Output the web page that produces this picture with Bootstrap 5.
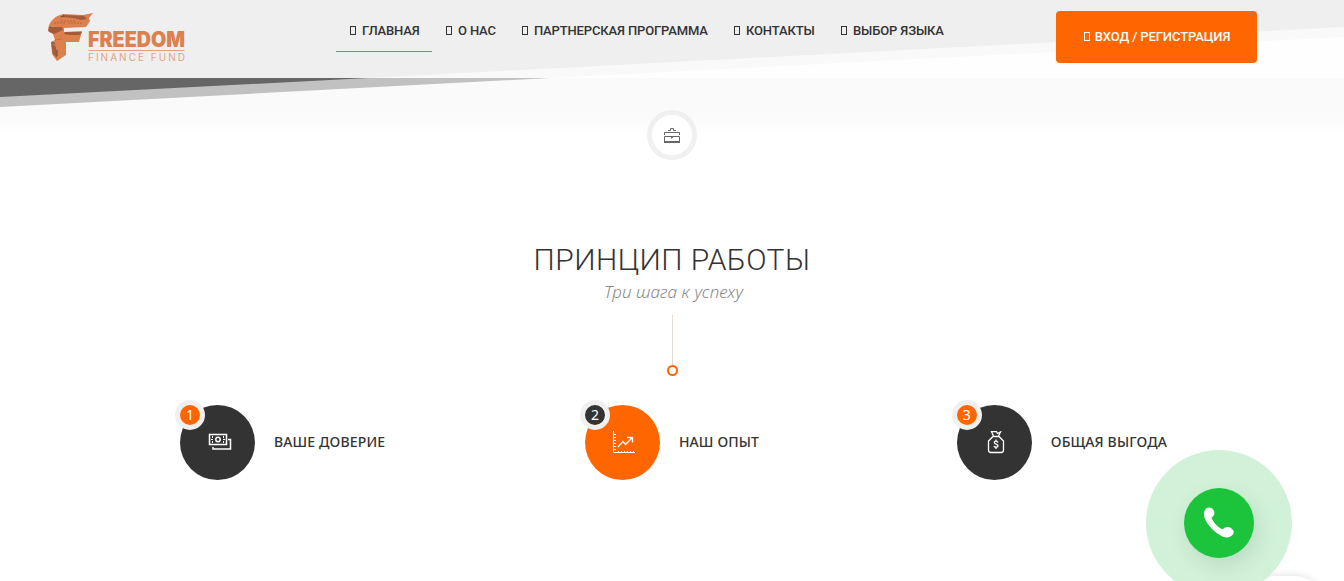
<!DOCTYPE html>
<html lang="ru">
<head>
    <meta charset="UTF-8">
    <meta name="viewport" content="width=device-width, initial-scale=1.0">
    <title>Freedom Finance Fund</title>
    <link href="https://cdn.jsdelivr.net/npm/bootstrap@5.3.2/dist/css/bootstrap.min.css" rel="stylesheet">
    <style>
        body {
            font-family: "Noto Sans", sans-serif;
            color: #333;
            background: #fff;
            height: 581px;
            overflow: hidden;
        }
        /* slanted edge of the slider, seen through the header */
        .slant {
            position: absolute;
            top: 0;
            left: 0;
            z-index: -1;
        }
        .site-header {
            height: 78px;
            padding: 0 87px 0 46px;
            font-family: Roboto, sans-serif;
        }
        .brand-logo {
            width: 150px;
            margin-top: 11px;
        }
        .main-menu {
            margin-left: 140px;
        }
        .main-menu .nav-link {
            height: 52px;
            padding: 20px 0 0 14px;
            font-size: 13px;
            line-height: 22px;
            font-weight: 500;
            letter-spacing: -.14px;
            color: #333;
            white-space: nowrap;
            border-bottom: 1px solid transparent;
        }
        .main-menu .nav-link.active {
            border-color: #ff6600;
        }
        .w-home { width: 96px; }
        .w-about { width: 76px; }
        .w-partner { width: 212px; }
        .w-contact { width: 107px; }
        .w-lang { width: 129px; }
        .box-glyph {
            display: inline-block;
            width: 6px;
            height: 9px;
            border: 1px solid currentColor;
            margin-right: 6px;
        }
        .btn-login {
            --bs-btn-bg: #ff6600;
            --bs-btn-color: #fff;
            --bs-btn-hover-bg: #e65c00;
            --bs-btn-hover-color: #fff;
            width: 201px;
            height: 52px;
            margin-top: 11px;
            padding: 0 0 0 1px;
            line-height: 50px;
            font-size: 13px;
            font-weight: 500;
            letter-spacing: -.1px;
            border-radius: 4px;
            white-space: nowrap;
        }
        .btn-login .box-glyph {
            margin-right: 5px;
        }
        .case-badge {
            width: 50px;
            height: 50px;
            margin-top: 32px;
            background: #fff;
            border: 5px solid #f0f0f0;
        }
        .section-title {
            margin: 79px 0 0;
            font: 300 30px/42px Roboto, sans-serif;
            letter-spacing: .45px;
        }
        .section-sub {
            margin: -1px 0 0 3px;
            font-size: 17px;
            font-style: italic;
            font-weight: 300;
            letter-spacing: .1px;
            line-height: 24px;
            color: #888;
        }
        .title-line {
            width: 1px;
            height: 50px;
            margin-top: 11px;
            background: #e8d8d2;
        }
        .title-dot {
            width: 11px;
            height: 11px;
            border: 2px solid #ff6600;
        }
        .steps {
            padding: 0 177px 0 180px;
            margin-top: 29px;
        }
        .step-icon {
            width: 75px;
            height: 75px;
            background: #333;
        }
        .step-num {
            top: -5px;
            left: -5px;
            width: 30px;
            height: 30px;
            background: #ff6600;
            border: 5px solid #f0f0f0;
            color: #fff;
            font-size: 14px;
            line-height: 20px;
            text-align: center;
        }
        .step-mid { margin-left: 2px; }
        .step-mid .step-icon { background: #ff6600; }
        .step-mid .step-num { background: #333; }
        .step-name {
            margin: 0 0 2px 19px;
            font-size: 14px;
            font-weight: 500;
            letter-spacing: .14px;
            line-height: 20px;
            white-space: nowrap;
        }
        .call-halo {
            left: 1146px;
            top: 450px;
            width: 146px;
            height: 146px;
            background: #d1f2d9;
        }
        .call-btn {
            width: 70px;
            height: 70px;
            background: #1bc43b;
            box-shadow: 4px 8px 22px rgba(0, 0, 0, .1);
        }
        .chat-tab {
            left: 1246px;
            top: 576px;
            width: 78px;
            height: 60px;
            border-radius: 30px;
            background: #fff;
            box-shadow: 0 0 8px rgba(0, 0, 0, .14);
        }
    </style>
</head>
<body class="position-relative">
    <svg class="slant" width="1344" height="134" viewBox="0 0 1344 134">
        <defs>
            <linearGradient id="fade" x1="0" y1="0" x2="0" y2="1">
                <stop offset="0" stop-color="#fafafa"/>
                <stop offset=".72" stop-color="#fafafa"/>
                <stop offset="1" stop-color="#fff"/>
            </linearGradient>
        </defs>
        <rect width="1344" height="78" fill="#fefefe"/>
        <path d="M0 0H1344V37L550 78H0Z" fill="#f9f9f9"/>
        <path d="M0 0H1344V27L368 78H0Z" fill="#efefef"/>
        <rect y="78" width="1344" height="54" fill="url(#fade)"/>
        <path d="M0 78H550L0 107Z" fill="#c1c1c1"/>
        <path d="M0 78H368L0 97Z" fill="#666"/>
    </svg>

    <header class="site-header d-flex align-items-start">
        <a class="brand-logo" href="#">
            <svg class="d-block" width="150" height="56" viewBox="0 0 150 56">
                <path d="M2 19C3 10 9 5 17 3L37 4L47 2L43 7L44 10L40 16L18 17L18 21L36 20L33 31L20 31L20 44L11 50L6 43L5 31L9 29L7 23Z" fill="#dc804e"/>
                <path d="M14 6L19 4L38 5L41 8L35 9L28 7ZM2 19L5 16L16 16L17 19L8 23L3 21ZM19 21L36 21L34 24L24 24L18 23ZM5 31L10 36L11 47L7 43Z" fill="#a45a3b"/>
                <path d="M15 6L18 4.500M3 17L5 16M6 31L9 33M11 39V45" stroke="#4e4e4e" fill="none"/>
                <path d="M8 12H20M15 10H29M9 29L16 28M22 12H37" stroke="#b9653e" stroke-dasharray="2 1" fill="none"/>
                <text x="42" y="36" textLength="97" lengthAdjust="spacingAndGlyphs" font-family="Inter, sans-serif" font-weight="900" font-size="21" fill="#dc804e">FREEDOM</text>
                <path d="M42.500 39.500H138.500" stroke="#e4a181"/>
                <text x="42" y="49.500" textLength="97" font-family="Inter, sans-serif" font-size="10" fill="#e2a387">FINANCE FUND</text>
            </svg>
        </a>
        <nav class="main-menu nav flex-nowrap">
            <a class="nav-link active w-home" href="#"><span class="box-glyph"></span>ГЛАВНАЯ</a>
            <a class="nav-link w-about" href="#"><span class="box-glyph"></span>О НАС</a>
            <a class="nav-link w-partner" href="#"><span class="box-glyph"></span>ПАРТНЕРСКАЯ ПРОГРАММА</a>
            <a class="nav-link w-contact" href="#"><span class="box-glyph"></span>КОНТАКТЫ</a>
            <a class="nav-link w-lang" href="#"><span class="box-glyph"></span>ВЫБОР ЯЗЫКА</a>
        </nav>
        <a class="btn btn-login ms-auto" href="#"><span class="box-glyph"></span>ВХОД / РЕГИСТРАЦИЯ</a>
    </header>

    <main class="d-flex flex-column align-items-center">
        <div class="case-badge rounded-circle d-flex align-items-center justify-content-center">
            <svg width="18" height="18" viewBox="0 0 18 18" fill="none" stroke="#666">
                <path d="M5 4.500H7.500V2.500H10.500V4.500H13M1.500 9V6.500H16.500V9M1.500 15V10.500H16.500V15M8.500 10V12.500M10 11.500H8"/>
                <path d="M1 16H17" stroke-width="2"/>
            </svg>
        </div>

        <h2 class="section-title">ПРИНЦИП РАБОТЫ</h2>
        <p class="section-sub">Три шага к успеху</p>
        <div class="title-line"></div>
        <div class="title-dot rounded-circle"></div>

        <div class="steps w-100 d-flex justify-content-between">
            <div class="d-flex align-items-center">
                <div class="step-icon position-relative rounded-circle d-flex align-items-center justify-content-center">
                    <span class="step-num position-absolute rounded-circle">1</span>
                    <svg class="ms-1" width="24" height="24" viewBox="0 0 24 24" fill="none" stroke="#fff">
                        <path d="M1.500 3.500H18.500V13.500H1.500Z" stroke-width="1.500"/>
                        <circle cx="10" cy="8.500" r="2.200" stroke-width="1.500"/>
                        <path d="M4.500 5V7M4.500 10V12M15.500 5V7M15.500 10V12M3 8.500H5M15 8.500H17"/>
                        <path d="M20 8.500H22.500V18H5V16" stroke-width="1.500"/>
                    </svg>
                </div>
                <h5 class="step-name">ВАШЕ ДОВЕРИЕ</h5>
            </div>
            <div class="step-mid d-flex align-items-center">
                <div class="step-icon position-relative rounded-circle d-flex align-items-center justify-content-center">
                    <span class="step-num position-absolute rounded-circle">2</span>
                    <svg class="ms-1" width="24" height="24" viewBox="0 0 24 24" fill="none" stroke="#fff">
                        <path d="M1.500 0V21.500H23"/>
                        <path d="M2 3.500H4M2 6.500H4M2 9.500H4M2 12.500H4M2 15.500H4M2 18.500H4M6.500 21V20M9.500 21V20M12.500 21V20M15.500 21V20M18.500 21V20M21.500 21V20"/>
                        <path d="M6 16L11 10.500L13.500 13.500L20 7M15 6.500H20.500V11.500" stroke-width="1.300"/>
                    </svg>
                </div>
                <h5 class="step-name">НАШ ОПЫТ</h5>
            </div>
            <div class="d-flex align-items-center">
                <div class="step-icon position-relative rounded-circle d-flex align-items-center justify-content-center">
                    <span class="step-num position-absolute rounded-circle">3</span>
                    <svg class="ms-1" width="24" height="24" viewBox="0 0 24 24" fill="none" stroke="#fff" stroke-width="1.300">
                        <path d="M9 5.500H15L19.500 10V19C19.500 20.500 18.500 21.500 17 21.500H7C5.500 21.500 4.500 20.500 4.500 19V10L9 5.500ZM9.500 5L7.500 .700H12.500L13.500 2.500L16.500 1L14.500 5"/>
                        <path d="M14 11.500C13.500 9.700 10.300 9.700 10.300 11.500C10.300 13.500 14 12.800 14 14.800C14 16.700 10.500 16.700 10 15M12 8.500V10M12 16.500V18"/>
                    </svg>
                </div>
                <h5 class="step-name">ОБЩАЯ ВЫГОДА</h5>
            </div>
        </div>
    </main>

    <div class="chat-tab position-absolute"></div>
    <a class="call-halo position-absolute rounded-circle d-flex align-items-center justify-content-center" href="#" aria-label="Позвонить">
        <span class="call-btn rounded-circle d-flex align-items-center justify-content-center">
            <svg width="32" height="32" viewBox="0 0 32 32" fill="#fff">
                <path d="M2 3C4-.5 9-.2 11 4C12 7 11 9 8.500 10.500C10 15 15 20.500 19.500 22.500C21.500 20 25.500 19 28.500 21.500C31 23.500 31.500 26 29.500 28C26 31.500 21 31 16 27.500C9 23 3 16 1.300 10C.6 7 1 4.600 2 3Z"/>
            </svg>
        </span>
    </a>

    <script src="https://cdn.jsdelivr.net/npm/bootstrap@5.3.2/dist/js/bootstrap.bundle.min.js"></script>
</body>
</html>
